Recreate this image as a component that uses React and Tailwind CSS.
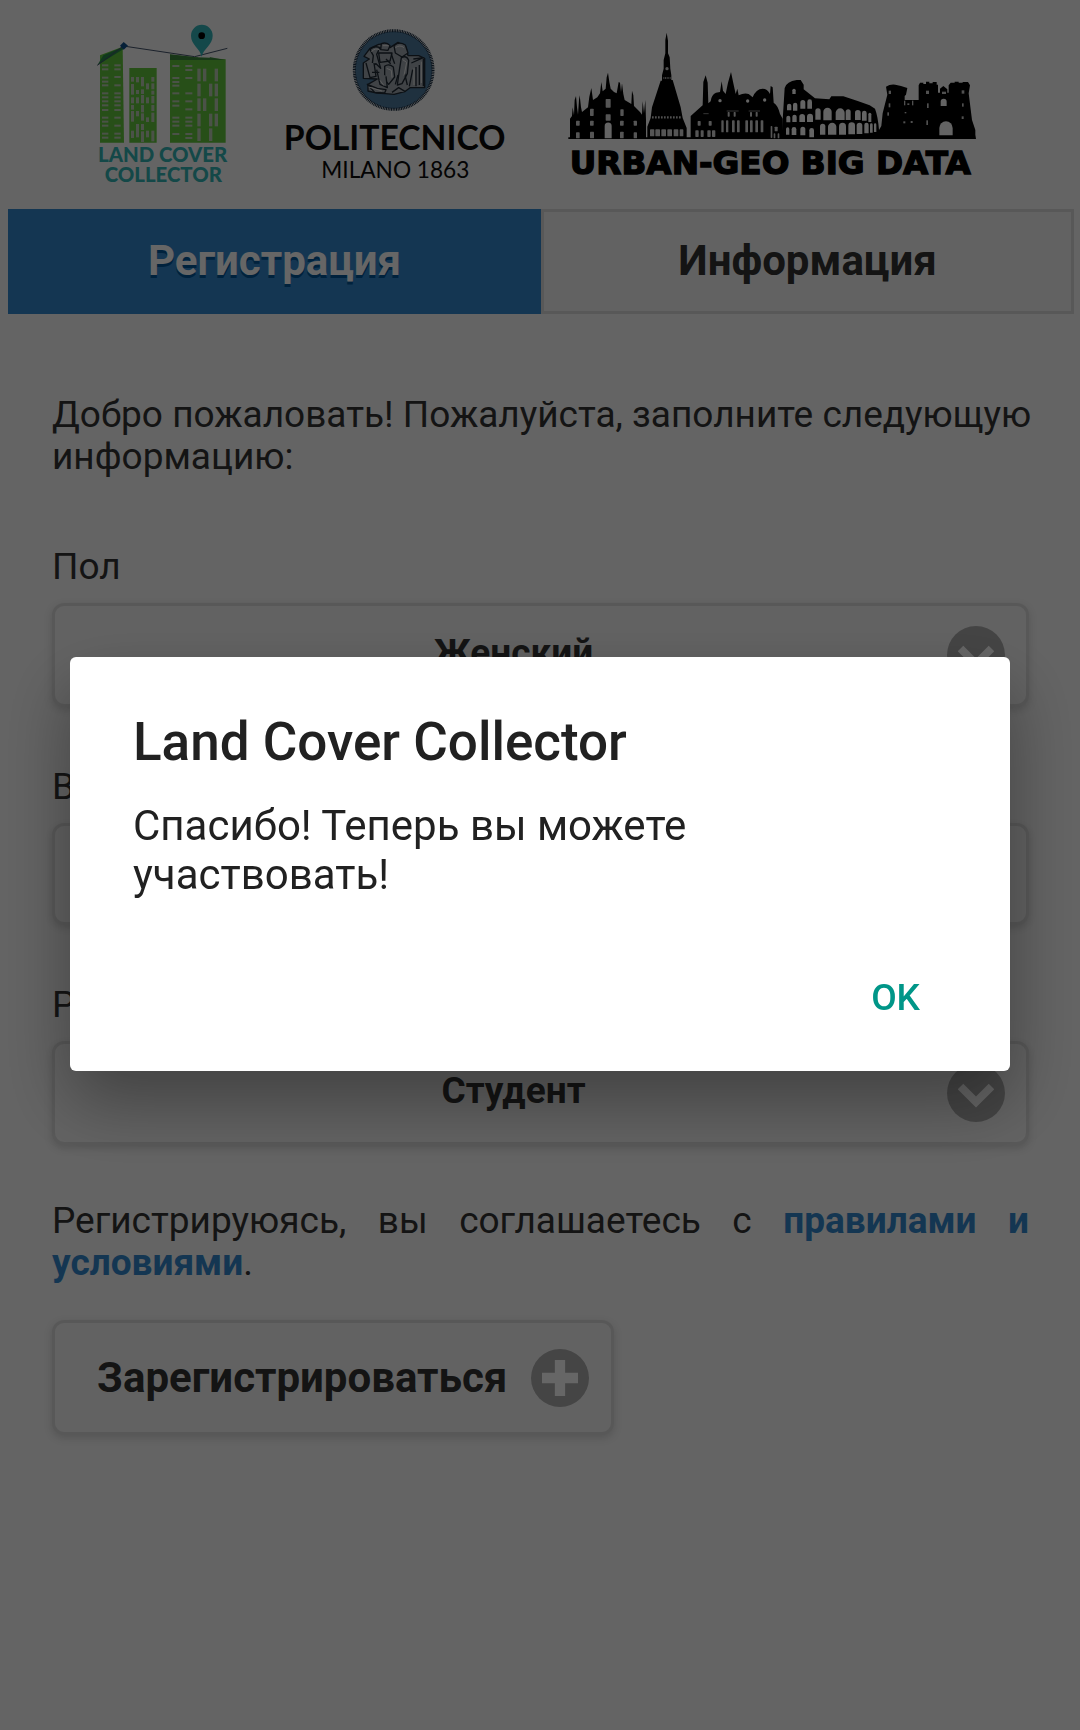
import React from "react";

const NARROW_WINDOWS = [
  [66, 163], [103, 163], [66, 175], [103, 175], [66, 200], [103, 198], [66, 212], [66, 223], [103, 223],
  [66, 247], [103, 247], [66, 259], [103, 259], [66, 271], [103, 271], [66, 283], [103, 283], [66, 297], [103, 297],
  [66, 320], [103, 320], [66, 332], [66, 344], [103, 344], [66, 368], [103, 368], [66, 380], [103, 380],
];

const SLIM_WINDOWS = [
  [153, 201, 14], [168, 201, 16], [183, 201, 28], [214, 201, 14], [153, 222, 18], [198, 220, 18], [214, 220, 18],
  [153, 240, 14], [168, 240, 12], [183, 238, 14], [214, 242, 12], [153, 262, 18], [168, 262, 18], [183, 255, 25], [198, 262, 18], [214, 258, 22],
  [153, 285, 14], [183, 285, 22], [214, 285, 18], [153, 303, 32], [168, 303, 16], [183, 310, 22], [198, 322, 14], [214, 308, 28],
  [168, 342, 40], [183, 342, 18], [153, 362, 22], [183, 364, 32], [198, 362, 20], [214, 362, 32],
];

const WIDE_WINDOWS = [
  [277, 165], [316, 165], [316, 177], [277, 201], [316, 201], [277, 213], [277, 224], [277, 247], [316, 247],
  [277, 271], [316, 271], [277, 284], [316, 295], [277, 320], [316, 320], [277, 332], [316, 332], [277, 344], [316, 344],
  [277, 369], [316, 369], [316, 381],
];

const TALL_WINDOWS = [
  [352, 176], [369, 176], [404, 176], [352, 221], [387, 221], [404, 221], [352, 265], [369, 265], [404, 265],
  [352, 311], [387, 311], [404, 311], [352, 355], [387, 355],
];

function LandCoverLogo() {
  return (
    <svg viewBox="0 0 540 570" className="h-[190px] w-[180px] shrink-0" role="img" aria-label="Land Cover Collector">
      <g fill="#62c63c">
        <path d="M60 136 128 110 132 398H60Z" />
        <path d="M148 174H230V398H148Z" />
        <path d="M270 134 344 142 437 148V398H270Z" />
      </g>
      <path d="M70 136 130 110 132 116 52 166Z" fill="#2a8c4c" />
      <path d="M52 166 130 108 344 140 442 115" fill="none" stroke="#44546c" strokeWidth="3" />
      <path d="M270 133 348 142 384 140 436 150H270Z" fill="#3c8a3c" />
      <path d="M352 142 386 136 390 143Z" fill="#f9f9f9" />
      <g fill="#bccdb4">
        {NARROW_WINDOWS.map(([x, y]) => (
          <rect key={`${x}-${y}`} x={x} y={y} width="19" height="6" />
        ))}
        {SLIM_WINDOWS.map(([x, y, h]) => (
          <rect key={`${x}-${y}`} x={x} y={y} width="9" height={h} />
        ))}
        {WIDE_WINDOWS.map(([x, y]) => (
          <rect key={`${x}-${y}`} x={x} y={y} width="21" height="6" />
        ))}
        {TALL_WINDOWS.map(([x, y]) => (
          <rect key={`${x}-${y}`} x={x} y={y} width="10" height="38" />
        ))}
      </g>
      <path d="M120 107 131 96 144 107 131 119Z" fill="#0f508c" />
      <path d="M365 140C361 116 333 104 333 77a32 32 0 0 1 65 0C398 104 370 116 365 140Z" fill="#32b4b9" />
      <circle cx="365" cy="77" r="10" fill="#000" />
      <g className="font-['Lato'] font-black" fill="#32b4b4" textAnchor="middle">
        <text x="248" y="455" fontSize="61">LAND COVER</text>
        <text x="250" y="517" fontSize="61">COLLECTOR</text>
      </g>
    </svg>
  );
}

function PolitecnicoLogo() {
  return (
    <svg viewBox="0 0 750 540" className="h-[180px] w-[250px] shrink-0" role="img" aria-label="Politecnico Milano 1863">
      <circle cx="371" cy="165" r="116" fill="#4e7a9e" />
      <circle cx="371" cy="165" r="118" fill="none" stroke="#14283c" strokeWidth="9" strokeDasharray="3 2" />
      <g fill="#a0a8b0" stroke="#1e2832" strokeWidth="4" strokeLinejoin="round">
        <path d="M282 124 300 100 326 88 350 86 360 98 384 82 408 96 414 122 446 122 464 130V218H420L404 230 372 238 346 236 320 234 294 228V208L322 192 280 190V144L298 132Z" />
        <path d="M300 104q12-14 30-6l-10 20 12 42-14-14-12 8 4-32z" />
        <path d="M334 86q16-6 26 6l-6 14-22-2z" />
        <path d="M372 92q16-14 34-2l8 24-18 12-20-12z" />
        <path d="M326 114h40l-6 24-30 4z" />
        <path d="M394 128q16-8 22 8l-4 40-16 30-14 4 6-44z" />
        <path d="M344 154q12-10 26 2l4 30-18 22-12-14z" />
        <path d="M288 144l12 44 18-4-6-40M320 164l10 44 22 10-4-34" />
        <path d="M424 144l36-16M430 132l30-4M460 132v82M448 150v60M438 156v58M428 164l-10 50" />
        <path d="M292 208l30 12 26 4-4 10-30-2zM366 232l20-14 20 12" />
        <path d="M306 172h22M364 118l10 28M348 132l14 14M384 180l-8 28M404 176l8 34" />
      </g>
      <g stroke="#e6e6e6" strokeWidth="3" fill="none">
        <path d="M304 110q14-14 26-4M338 92h18M376 98q14-10 26 0M398 134l12 8-8 40M350 160l14 6 2 22M296 216l40 12M432 160v50M454 140v64M330 196l12 16" />
      </g>
      <g textAnchor="middle" fill="#0a0a0a">
        <text x="374" y="404" fontSize="101" className="font-['Lato'] font-bold">POLITECNICO</text>
        <text x="376" y="488" fontSize="68" className="font-['Lato'] font-normal">MILANO 1863</text>
      </g>
    </svg>
  );
}

const SKYLINE_OPENINGS = [
  [48, 302, 11, 15], [90, 302, 11, 15], [180, 302, 11, 15], [221, 302, 10, 15],
  [48, 337, 11, 18], [90, 335, 12, 20], [180, 335, 11, 20], [221, 337, 10, 18],
  [90, 266, 11, 22], [181, 268, 10, 20], [137, 237, 15, 26], [137, 283, 15, 19],
  [270, 328, 13, 21], [286, 328, 14, 21], [304, 328, 14, 21], [322, 328, 14, 21], [341, 328, 14, 21], [359, 328, 11, 21],
  [413, 303, 9, 14], [446, 303, 9, 14], [406, 331, 10, 20], [422, 331, 9, 20], [442, 331, 10, 20], [456, 331, 10, 20],
  [484, 301, 7, 36], [498, 301, 7, 36], [516, 301, 8, 36], [531, 301, 8, 36], [556, 301, 8, 36], [570, 301, 8, 36], [586, 301, 8, 36], [602, 301, 8, 36],
  [503, 276, 6, 14], [521, 276, 6, 14], [570, 276, 6, 14], [587, 276, 6, 14],
  [632, 318, 5, 36], [644, 320, 9, 14], [641, 340, 5, 15], [653, 340, 5, 15],
];

const COLOSSEUM_ARCHES = [
  [697, 206, 10, 16], [681, 251, 13, 20], [699, 248, 13, 24], [721, 240, 15, 26], [742, 238, 14, 28],
  [679, 287, 12, 20], [697, 284, 13, 22], [718, 282, 17, 24], [741, 281, 18, 25],
  [678, 322, 10, 22], [695, 321, 14, 24], [721, 320, 15, 26], [748, 324, 14, 28],
  [766, 265, 16, 34], [790, 263, 25, 38], [827, 265, 27, 35], [857, 268, 15, 32], [885, 270, 17, 30], [906, 272, 14, 30], [925, 278, 9, 28],
  [780, 311, 16, 33], [804, 308, 25, 36], [837, 308, 21, 36], [865, 307, 20, 36], [890, 308, 17, 34], [913, 308, 13, 32], [930, 310, 8, 28], [942, 310, 7, 26],
];

const CASTLE_OPENINGS = [
  [986, 212, 7, 10], [986, 250, 5, 12], [982, 277, 5, 10], [1032, 242, 4, 14], [1056, 242, 4, 14], [1042, 250, 6, 5],
  [1034, 276, 5, 4], [1030, 304, 6, 6], [1052, 303, 6, 6], [1098, 212, 9, 10], [1101, 250, 5, 14], [1099, 301, 5, 14],
  [1146, 215, 12, 7], [1205, 211, 8, 10], [1206, 250, 5, 10], [1205, 289, 6, 8],
];

function UrbanGeoLogo() {
  return (
    <svg viewBox="0 0 1290 510" className="h-[170px] w-[430px] shrink-0" role="img" aria-label="Urban-Geo Big Data">
      <g fill="#000">
        <path d="M25 357V352H30V296L36 288 38 262 42 286 44 240 48 228 51 262 54 284 57 240 59 226 63 262 66 276 84 262 88 230 94 204 99 240 112 232 120 220 124 186 128 214 137 206 140 172 144 158 148 186 152 206 162 216 170 220 176 186 180 188 183 216 186 190 190 222 194 240 214 252 216 212 220 226 222 258 240 276 246 284 248 244 252 280 256 240 258 300V352H262V320L272 294 276 262 302 182H306V166L311 146V120L316 100V60L320 38 324 62V100L329 112 331 146 334 166V180H338L362 262 368 294 380 324V352H392V288L428 256 430 186 437 166 443 188 445 250 452 244Q454 224 468 218L480 216 485 184 489 212 497 222 504 188 513 156 520 190 527 222 532 206 536 226Q552 218 566 222L578 232Q588 206 608 206 622 206 630 222L632 198 638 202 641 248Q654 256 660 282L668 296V357Z" />
        <path d="M666 357V332L674 204Q680 184 710 180H722L731 194V208L765 235 808 238 814 229H850L893 243 929 256 945 266Q954 290 957 330L964 318 968 280 982 224 978 200Q990 192 1006 194T1042 204L1038 224 1034 228V240H1076V196L1080 188H1090V192H1098V185H1108V190H1118V186H1130V194H1134V218H1140V206L1150 198 1162 208V218H1166V196L1172 188H1184V185H1196V188H1208V186H1224L1230 196 1226 220 1236 300 1246 330V344L1248 357Z" />
      </g>
      <g fill="#f9f9f9">
        {SKYLINE_OPENINGS.map(([x, y, w, h]) => (
          <rect key={`${x}-${y}`} x={x} y={y} width={w} height={h} rx="2" opacity="0.85" />
        ))}
        {COLOSSEUM_ARCHES.map(([x, y, w, h]) => (
          <path key={`${x}-${y}`} d={`M${x} ${y + h}V${y + w / 2}a${w / 2} ${w / 2} 0 0 1 ${w} 0V${y + h}Z`} />
        ))}
        {CASTLE_OPENINGS.map(([x, y, w, h]) => (
          <rect key={`${x}-${y}`} x={x} y={y} width={w} height={h} opacity="0.8" />
        ))}
        <path d="M134 355V318a10 10 0 0 1 21 0V355Z" />
        <path d="M1138 346V324a20 20 0 0 1 40 0V346Z" />
        <path d="M1142 258V245a9 9 0 0 1 18 0V258Z" />
        <circle cx="480" cy="242" r="5" />
        <circle cx="563" cy="243" r="5" />
        <circle cx="614" cy="240" r="5" />
        <circle cx="321" cy="146" r="5" opacity="0.8" />
      </g>
      <g fill="none" stroke="#f9f9f9" opacity="0.8">
        <path d="M276 292H366" strokeWidth="7" strokeDasharray="5 4" />
        <path d="M310 174H332" strokeWidth="4" strokeDasharray="3 2" />
        <path d="M500 273H536M566 273H600M430 281H446" strokeWidth="2" />
      </g>
      <text
        x="631"
        y="462"
        textAnchor="middle"
        fontSize="98"
        fill="#000"
        stroke="#000"
        strokeWidth="4"
        className="font-['DejaVu_Sans'] font-bold"
      >
        URBAN-GEO BIG DATA
      </text>
    </svg>
  );
}

function RoundIcon({ points }) {
  return (
    <span className="pointer-events-none flex size-[58px] shrink-0 items-center justify-center rounded-full bg-black/30">
      <svg viewBox="0 0 14 14" className="size-9" fill="#fff" aria-hidden="true">
        <polygon points={points} />
      </svg>
    </span>
  );
}

const FIELD =
  "block w-full appearance-none rounded-xl border-3 border-[#dddddd] bg-[#f6f6f6] shadow-[0_3px_9px_rgba(0,0,0,0.15)] outline-none";

function SelectField({ id, label, options }) {
  return (
    <div className="flex flex-col gap-[15px]">
      <label htmlFor={id}>{label}</label>
      <div className="relative">
        <select id={id} className={`${FIELD} h-[104px] pr-[78px] pb-1 pl-6 text-center font-bold [text-align-last:center]`}>
          {options.map((option) => (
            <option key={option}>{option}</option>
          ))}
        </select>
        <div className="pointer-events-none absolute inset-y-0 right-6 flex items-center">
          <RoundIcon points="11.949,3.404 7,8.354 2.05,3.404 -0.071,5.525 7,12.597 14.07,5.525" />
        </div>
      </div>
    </div>
  );
}

export default function App() {
  return (
    <div className="min-h-screen bg-[#f9f9f9] font-['Roboto','Liberation_Sans',sans-serif] text-[37px] leading-[42px] text-[#333333]">
      <header className="flex items-center pt-[10px] pb-[9px] pl-20">
        <LandCoverLogo />
        <div className="ml-[10px] flex items-center gap-10">
          <PolitecnicoLogo />
          <UrbanGeoLogo />
        </div>
      </header>

      <nav className="mr-[6px] ml-2 grid grid-cols-2 text-[42px] font-bold leading-[49px]">
        <button className="h-[105px] border-3 border-[#3388cc] bg-[#3388cc] pb-[2px] text-white [text-shadow:0_3px_0_#005599]">
          Регистрация
        </button>
        <button className="h-[105px] border-3 border-[#dddddd] bg-[#f6f6f6] pb-[2px]">Информация</button>
      </nav>

      <main className="pt-20 pr-[51px] pl-[52px]">
        <p className="-mr-4">Добро пожаловать! Пожалуйста, заполните следующую информацию:</p>

        <form className="mt-[68px]" onSubmit={(event) => event.preventDefault()}>
          <div className="flex flex-col gap-[59px]">
            <SelectField id="gender" label="Пол" options={["Женский", "Мужской"]} />
            <div className="flex flex-col gap-[15px]">
              <label htmlFor="age">Возраст</label>
              <input id="age" type="text" className={`${FIELD} h-[102px] px-6`} />
            </div>
            <SelectField id="occupation" label="Род занятий" options={["Студент", "Преподаватель"]} />
          </div>

          <p className="mt-[55px] text-justify">
            Регистрируюясь, вы соглашаетесь с{" "}
            <a href="#terms" className="font-bold text-[#3388cc]">
              правилами и условиями
            </a>
            .
          </p>

          <button
            type="submit"
            className="mt-9 flex h-[115px] items-center gap-6 rounded-xl border-3 border-[#dddddd] bg-[#f6f6f6] pr-[22px] pl-[42px] text-[42px] font-bold leading-[49px] shadow-[0_3px_9px_rgba(0,0,0,0.15)]"
          >
            Зарегистрироваться
            <RoundIcon points="14,5 9,5 9,0 5,0 5,5 0,5 0,9 5,9 5,14 9,14 9,9 14,9" />
          </button>
        </form>
      </main>

      <div className="fixed inset-0 flex items-center justify-center bg-black/60 px-[70px] pb-[2px]">
        <section
          role="dialog"
          aria-modal="true"
          aria-labelledby="dialog-title"
          className="flex w-full flex-col rounded-md bg-white px-[63px] pt-[54px] pb-[50px] text-[#212121] shadow-[0_30px_70px_rgba(0,0,0,0.35)]"
        >
          <h1 id="dialog-title" className="text-[53px] font-medium leading-[62px]">
            Land Cover Collector
          </h1>
          <p className="mt-7 max-w-[640px] text-[42px] leading-[49px]">Спасибо! Теперь вы можете участвовать!</p>
          <button className="mt-[76px] mr-[27px] self-end text-[37px] font-medium leading-[46px] text-[#009688]">OK</button>
        </section>
      </div>
    </div>
  );
}
